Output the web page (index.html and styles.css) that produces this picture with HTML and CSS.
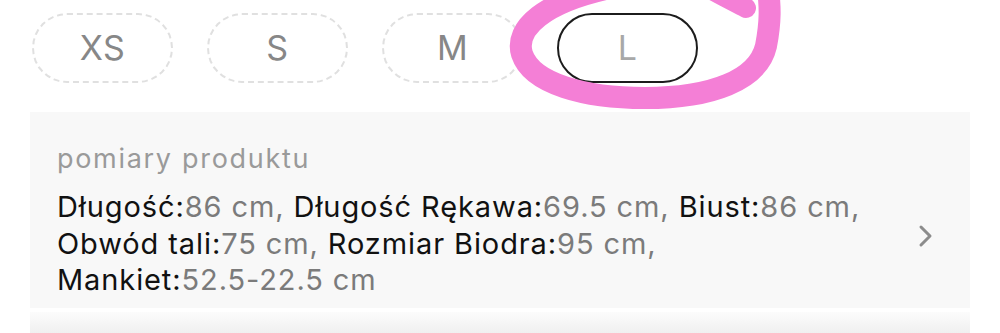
FILE: index.html
```html
<!DOCTYPE html>
<html lang="pl">
<head>
<meta charset="utf-8">
<link rel="stylesheet" href="styles.css">
</head>
<body>
<div class="page">
  <div class="sizes">
    <div class="pill">XS</div>
    <div class="pill">S</div>
    <div class="pill">M</div>
    <div class="pill selected">L</div>
  </div>
  <svg class="scribble" width="1000" height="130" viewBox="0 0 1000 130">
    <path d="M 610 -12 C 545 2, 514 28, 522 54 C 532 84, 585 98, 645 98 C 712 98, 758 80, 766 46 C 771 20, 770 6, 768 -12" fill="none" stroke="#f47fd6" stroke-width="22" stroke-linecap="round"/>
    <path d="M 746 8 C 735 2, 722 -4, 705 -14" fill="none" stroke="#f47fd6" stroke-width="20" stroke-linecap="round"/>
  </svg>
  <div class="card">
    <div class="card-body">
      <div class="card-title">pomiary produktu</div>
      <div class="measures">
        <span class="k">Długość:</span><span class="v">86 cm, </span><span class="k">Długość Rękawa:</span><span class="v">69.5 cm, </span><span class="k">Biust:</span><span class="v">86 cm,</span><br>
        <span class="k">Obwód tali:</span><span class="v">75 cm, </span><span class="k">Rozmiar Biodra:</span><span class="v">95 cm,</span><br>
        <span class="k">Mankiet:</span><span class="v">52.5-22.5 cm</span>
      </div>
    </div>
    <svg class="chevron" width="16" height="24" viewBox="0 0 16 24">
      <path d="M 3 3 L 12 12 L 3 21" fill="none" stroke="#8c8c8c" stroke-width="3" stroke-linecap="round" stroke-linejoin="round"/>
    </svg>
  </div>
  <div class="next"></div>
</div>
</body>
</html>
```

FILE: styles.css
```css
* { box-sizing: border-box; }
html, body { margin: 0; padding: 0; background: #ffffff; }
body { font-family: Inter, "Liberation Sans", Arial, sans-serif; }

.page {
  position: relative;
  width: 1000px;
  height: 333px;
  overflow: hidden;
}

.sizes {
  display: flex;
  gap: 34px;
  padding: 13px 0 0 32px;
  height: 112px;
}

.pill {
  width: 141px;
  height: 70px;
  border: 2px dashed #e0e0e0;
  border-radius: 35px;
  display: flex;
  align-items: center;
  justify-content: center;
  font-size: 34px;
  letter-spacing: 0.5px;
  color: #878787;
  line-height: 1;
}

.pill.selected {
  border: 2px solid #1c1c1c;
  color: #a8a8a8;
}

.scribble {
  position: absolute;
  left: 0;
  top: 0;
  pointer-events: none;
}

.card {
  margin: 0 30px;
  height: 196px;
  background: #f8f8f8;
  display: flex;
  align-items: flex-start;
  padding: 0 36px 0 27px;
}

.card-body {
  flex: 1;
  min-width: 0;
  white-space: nowrap;
}

.card-title {
  font-size: 27px;
  letter-spacing: 1.7px;
  line-height: 32px;
  color: #9a9a9a;
  margin-top: 31px;
}

.measures {
  margin-top: 14px;
  font-size: 29px;
  letter-spacing: 0.9px;
  line-height: 36.5px;
}

.k { color: #111111; }
.v { color: #7b7b7b; }

.chevron {
  flex: none;
  margin-top: 112px;
}

.next {
  margin: 4px 30px 0;
  height: 21px;
  background: linear-gradient(#fcfcfc, #f0f0f0);
}
```
